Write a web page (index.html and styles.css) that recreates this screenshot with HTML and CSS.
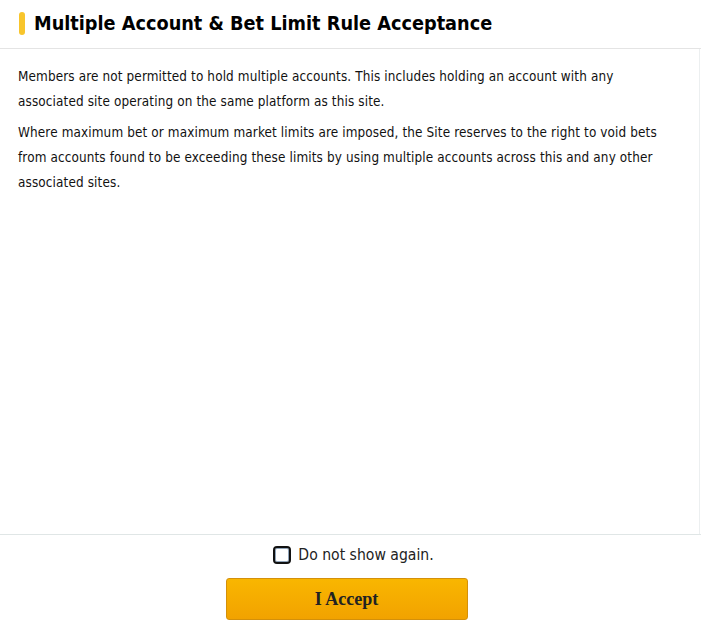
FILE: index.html
```html
<!DOCTYPE html>
<html>
<head>
<meta charset="utf-8">
<link rel="stylesheet" href="styles.css">
</head>
<body>
<div class="modal">
  <header class="modal-head">
    <span class="accent"></span>
    <h1 class="title">Multiple Account &amp; Bet Limit Rule Acceptance</h1>
  </header>
  <main class="modal-body">
    <p>Members are not permitted to hold multiple accounts. This includes holding an account with any associated site operating on the same platform as this site.</p>
    <p>Where maximum bet or maximum market limits are imposed, the Site reserves to the right to void bets from accounts found to be exceeding these limits by using multiple accounts across this and any other associated sites.</p>
  </main>
  <footer class="modal-foot">
    <label class="check-row"><span class="check"></span><span class="check-text">Do not show again.</span></label>
    <button class="accept">I Accept</button>
  </footer>
</div>
</body>
</html>
```
FILE: styles.css
```css
html, body {
  margin: 0;
  padding: 0;
  background: #fff;
}
.modal {
  width: 701px;
  height: 622px;
  display: flex;
  flex-direction: column;
  font-family: "DejaVu Sans Condensed", "DejaVu Sans", sans-serif;
  color: #111;
}
.modal-head {
  height: 49px;
  box-sizing: border-box;
  border-bottom: 1px solid #e4e4e4;
  display: flex;
  align-items: center;
  padding-left: 19px;
  gap: 9px;
  flex: none;
}
.accent {
  width: 6px;
  height: 23px;
  border-radius: 3px;
  background: #f8c52c;
  margin-top: -1px;
}
.title {
  margin: 0;
  font-size: 19.7px;
  font-weight: bold;
  color: #000;
  margin-top: -2px;
}
.modal-body {
  flex: 1;
  border-right: 1px solid #eceff0;
  width: 700px;
  padding: 15px 24px 0 18px;
  box-sizing: border-box;
  font-size: 13.4px;
  letter-spacing: 0.13px;
  line-height: 25px;
}
.modal-body p {
  margin: 0 0 6px 0;
}
.modal-foot {
  height: 88px;
  flex: none;
  border-top: 1px solid #e0e6e6;
  box-sizing: border-box;
  display: flex;
  flex-direction: column;
  align-items: center;
  padding-top: 10px;
}
.check-row {
  display: flex;
  align-items: center;
  gap: 7px;
  margin-left: 6px;
  height: 20px;
}
.check {
  width: 14px;
  height: 14px;
  border: 2px solid #111;
  border-radius: 4px;
  box-shadow: inset 0 0 0 1px #8fa3b8;
  background: #fff;
}
.check-text {
  font-size: 15.6px;
  color: #222;
}
.accept {
  margin-top: 13px;
  margin-right: 8px;
  width: 242px;
  height: 42px;
  border: 1px solid #d4900a;
  border-radius: 3px;
  background: linear-gradient(#f9b600, #f2a200);
  font-family: "Liberation Serif", serif;
  font-weight: bold;
  font-size: 18px;
  color: #222;
}
```
